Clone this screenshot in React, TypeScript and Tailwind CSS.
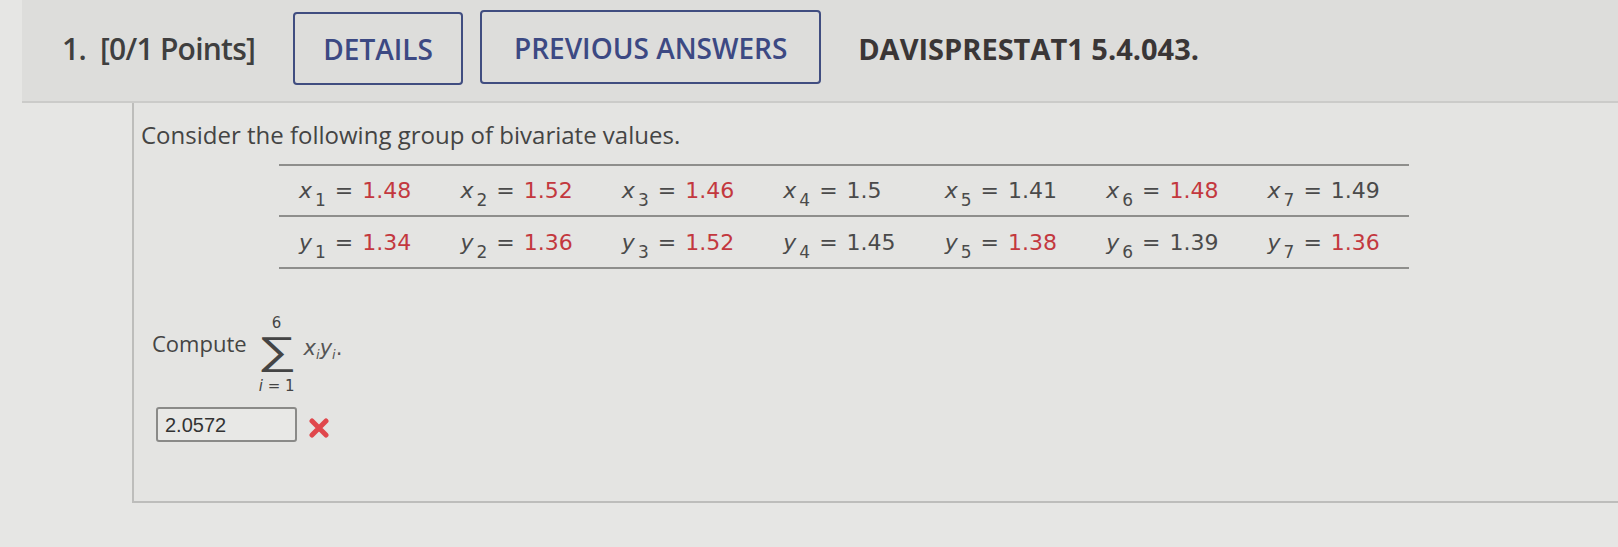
import { memo } from "react";

const cols = [
  { x: "1.48", xr: true, y: "1.34", yr: true },
  { x: "1.52", xr: true, y: "1.36", yr: true },
  { x: "1.46", xr: true, y: "1.52", yr: true },
  { x: "1.5", xr: false, y: "1.45", yr: false },
  { x: "1.41", xr: false, y: "1.38", yr: true },
  { x: "1.48", xr: true, y: "1.39", yr: false },
  { x: "1.49", xr: false, y: "1.36", yr: true },
];

const Cell = memo(function Cell({ v, n, value, red }: { v: string; n: number; value: string; red: boolean }) {
  return (
    <div className="pl-5 flex items-baseline whitespace-nowrap">
      <span className="italic">{v}</span>
      <span className="text-[17px] relative top-[8px] ml-[3px]">{n}</span>
      <span className="mx-[9px]">=</span>
      <span className={red ? "text-[#c3383e]" : ""}>{value}</span>
    </div>
  );
});

export default function App() {
  return (
    <div className="w-full h-[547px] overflow-hidden bg-[#e6e6e4] text-[#3f3f3f] font-['Open_Sans',sans-serif]">
      {/* question header */}
      <div className="ml-[22px] h-[103px] bg-[#dddddb] border-b-2 border-[#cbcbc9] flex items-center pl-[40px] pb-[4px]">
        <span className="text-[30px] font-semibold tracking-tight whitespace-nowrap">
          1.&nbsp; [0/1 Points]
        </span>
        <div className="ml-[38px] w-[170px] h-[73px] border-2 border-[#404d80] rounded-[4px] flex items-center justify-center text-[28px] font-semibold text-[#3c4983]">
          DETAILS
        </div>
        <div className="ml-[17px] w-[341px] h-[74px] -mt-[4px] border-2 border-[#404d80] rounded-[4px] flex items-center justify-center pt-[3px] text-[28px] font-semibold text-[#3c4983]">
          PREVIOUS ANSWERS
        </div>
        <span className="ml-[37px] text-[29px] font-bold text-[#3a3636] whitespace-nowrap">DAVISPRESTAT1 5.4.043.</span>
      </div>

      {/* question body */}
      <div className="ml-[132px] h-[400px] border-l-2 border-b-2 border-[#bdbdbb] bg-[#e4e4e2] pl-[7px] pt-[16px]">
        <p className="text-[24px] leading-[32px] text-[#444]">Consider the following group of bivariate values.</p>

        <div className="ml-[138px] mt-[13px] w-[1130px] border-t-2 border-b-2 border-[#8e8e8c] font-['DejaVu_Sans',sans-serif] text-[22px] text-[#4a4a4a]">
          <div className="grid grid-cols-7 h-[51px] items-center border-b-2 border-[#8e8e8c]">
            {cols.map((c, i) => (
              <Cell key={i} v="x" n={i + 1} value={c.x} red={c.xr} />
            ))}
          </div>
          <div className="grid grid-cols-7 h-[50px] items-center">
            {cols.map((c, i) => (
              <Cell key={i} v="y" n={i + 1} value={c.y} red={c.yr} />
            ))}
          </div>
        </div>

        <div className="mt-[46px] ml-[11px] flex items-center">
          <span className="text-[22px] text-[#444] -mt-[24px]">Compute</span>
          <div className="ml-[8px] w-[44px] flex flex-col items-center font-['DejaVu_Sans',sans-serif] text-[#444]">
            <span className="text-[15px] leading-[16px]">6</span>
            <div className="h-[46px] flex items-center justify-center">
              <span className="relative -top-[3px] text-[39px] leading-[34px] font-extralight scale-x-[1.4]">∑</span>
            </div>
            <span className="text-[15px] leading-[18px] whitespace-nowrap">
              <i>i</i> = 1
            </span>
          </div>
          <span className="ml-[5px] -mt-[12px] font-['DejaVu_Sans',sans-serif] text-[21px] text-[#555] whitespace-nowrap">
            <i>x</i>
            <sub className="text-[13px]"><i>i</i></sub>
            <i>y</i>
            <sub className="text-[13px]"><i>i</i></sub>.
          </span>
        </div>

        <div className="mt-[12px] ml-[15px] flex items-center">
          <div className="w-[141px] h-[35px] border-2 border-[#8a8a88] rounded-[3px] bg-[#e8e8e6] flex items-center pl-[7px] font-['Liberation_Sans',sans-serif] text-[20px] text-[#333]">
            2.0572
          </div>
          <svg className="ml-[11px] mt-[6px]" width="22" height="20" viewBox="0 0 22 20">
            <path d="M4 3 L18 17 M18 3 L4 17" stroke="#e0474c" strokeWidth="5" strokeLinecap="round" />
          </svg>
        </div>
      </div>
    </div>
  );
}
